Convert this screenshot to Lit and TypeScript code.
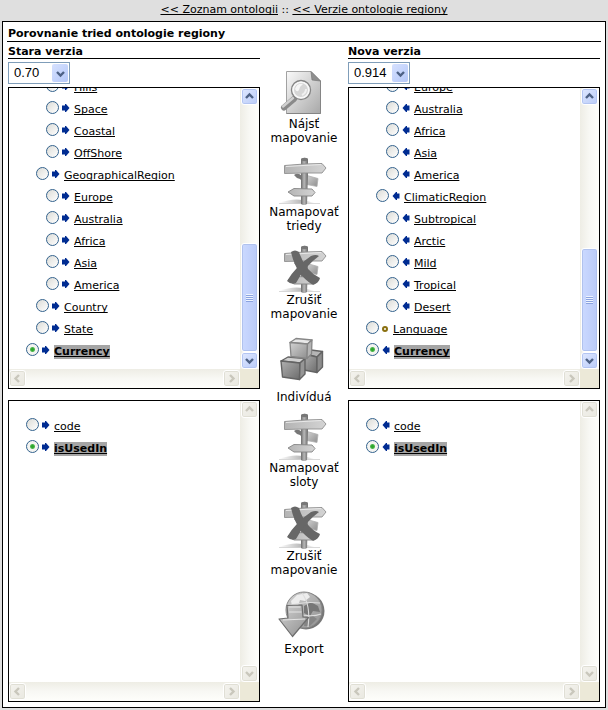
import { LitElement, html, css, svg, nothing } from "lit";
import { customElement, property } from "lit/decorators.js";
import { classMap } from "lit/directives/class-map.js";

type Marker = "right" | "left" | "dot";
interface Entry { name: string; level: number; marker: Marker; selected?: boolean; }

const entry = (marker: Marker) => (level: number, name: string, selected = false): Entry =>
  ({ name, level, marker, selected });
const old = entry("right");
const fresh = entry("left");

const oldClasses: Entry[] = [
  old(2, "Hills"), old(2, "Space"), old(2, "Coastal"), old(2, "OffShore"),
  old(1, "GeographicalRegion"), old(2, "Europe"), old(2, "Australia"),
  old(2, "Africa"), old(2, "Asia"), old(2, "America"),
  old(1, "Country"), old(1, "State"), old(0, "Currency", true),
];
const newClasses: Entry[] = [
  fresh(2, "Europe"), fresh(2, "Australia"), fresh(2, "Africa"), fresh(2, "Asia"),
  fresh(2, "America"), fresh(1, "ClimaticRegion"), fresh(2, "Subtropical"),
  fresh(2, "Arctic"), fresh(2, "Mild"), fresh(2, "Tropical"), fresh(2, "Desert"),
  entry("dot")(0, "Language"), fresh(0, "Currency", true),
];

const chevrons: Record<string, string> = {
  up: "M1 6 L4.5 2.5 L8 6",
  down: "M1 3 L4.5 6.5 L8 3",
  left: "M6 1 L2.5 4.5 L6 8",
  right: "M3 1 L6.5 4.5 L3 8",
};
const chevron = (dir: string) => html`
  <svg width="9" height="9" viewBox="0 0 9 9" aria-hidden="true">
    <path d=${chevrons[dir]} fill="none" stroke="currentColor" stroke-width="2.4" />
  </svg>`;

const markers = {
  right: html`<svg width="8" height="9" viewBox="0 0 8 9" aria-hidden="true">
    <path d="M0 1.5H3V0H4L7.5 4L4 8H3V6.5H0Z" fill="#002c92" /></svg>`,
  left: html`<svg width="8" height="9" viewBox="0 0 8 9" aria-hidden="true">
    <path d="M7.5 1.5H5V0H4L0.5 4L4 8H5V6.5H7.5Z" fill="#002c92" /></svg>`,
  dot: html`<svg width="7" height="9" viewBox="0 0 7 9" aria-hidden="true">
    <circle cx="3" cy="5" r="2" fill="#fff" stroke="#8a7010" stroke-width="2" /></svg>`,
};

@customElement("scroll-pane")
export class ScrollPane extends LitElement {
  @property({ type: Array }) entries: Entry[] = [];
  @property() label = "";
  /** Share of the track that the thumb covers; 0 means that nothing scrolls. */
  @property({ type: Number }) thumb = 0;

  static styles = css`
    :host { display: block; border: 1px solid #000; background: #fff; }
    .pane { display: grid; grid-template: 281px 19px / minmax(0, 1fr) 19px; }
    .view { display: flex; flex-direction: column; overflow: hidden; margin: 0; padding: 15px 0 0 17px; list-style: none; box-sizing: border-box; }
    .view.end { justify-content: flex-end; padding: 0 0 6px 17px; }
    .row { display: flex; flex: none; align-items: flex-start; height: 22px; }
    .row.level1 { padding-left: 10px; }
    .row.level2 { padding-left: 20px; }
    .radio {
      appearance: none; flex: none; box-sizing: border-box; width: 13px; height: 13px;
      margin: 2px 3px 0 0; border: 1px solid #33628d; border-radius: 50%;
      background: linear-gradient(135deg, #dcdcd7, #fff);
    }
    .radio:checked { background: radial-gradient(circle at 50% 50%, #2fa52f 0 1px, #4fb84f 2px, #f4f4f1 3px); }
    .marker { display: flex; margin: 5px 4px 0 0; }
    .name {
      margin-top: 4px; color: #000; font: 11px/14px Verdana, "DejaVu Sans", sans-serif;
      text-decoration: underline; text-decoration-thickness: 1px; text-underline-offset: 1px; text-decoration-skip-ink: none;
    }
    .selected { background: #a5a5a5; font-weight: bold; }
    .bar { display: flex; }
    .vertical { flex-direction: column; padding: 0 1px; background: linear-gradient(90deg, #eeede5, #f8f8f4 50%, #fefefb); }
    .horizontal { padding: 1px 0; background: linear-gradient(#eeede5, #f8f8f4 50%, #fefefb); }
    .track { flex: 1; display: flex; flex-direction: column; justify-content: flex-end; }
    .corner { background: #ece9d8; }
    .step {
      display: grid; place-items: center; flex: none; box-sizing: border-box; width: 17px; height: 17px; padding: 0;
      border: 1px solid #fff; border-radius: 3px; color: #4d6185;
      background: linear-gradient(135deg, #dfe8ff, #b9cbf8); box-shadow: inset 0 0 0 1px #b3c5f2;
    }
    .step:disabled { color: #c9c7bc; background: linear-gradient(135deg, #f4f3ee, #e9e8e0); box-shadow: inset 0 0 0 1px #e0dfd5; }
    .thumb {
      display: grid; place-items: center; box-sizing: border-box; border: 1px solid #fff; border-radius: 3px;
      background: linear-gradient(90deg, #cbd9ff, #bacbf9); box-shadow: inset 0 0 0 1px #b0c2ee;
    }
    .grip { width: 7px; height: 8px; background: repeating-linear-gradient(#eef4fe 0 1px, #8ba3e0 1px 2px); }
  `;

  private step(dir: string, caption: string, disabled: boolean) {
    return html`<button class="step" type="button" aria-label=${caption} ?disabled=${disabled}>${chevron(dir)}</button>`;
  }

  render() {
    const still = this.thumb === 0;
    return html`
      <div class="pane">
        <ul class=${classMap({ view: true, end: !still })} aria-label=${this.label}>
          ${this.entries.map((e, i) => html`
            <li class="row level${e.level}">
              <input class="radio" type="radio" name="entry" aria-labelledby="name${i}" .checked=${!!e.selected} />
              <span class="marker">${markers[e.marker]}</span>
              <a id="name${i}" class=${classMap({ name: true, selected: !!e.selected })} href="#${e.name}">${e.name}</a>
            </li>`)}
        </ul>
        <div class="bar vertical">
          ${this.step("up", "Hore", still)}
          <div class="track">
            ${still ? nothing : html`<div class="thumb" style="height:${this.thumb}%"><span class="grip"></span></div>`}
          </div>
          ${this.step("down", "Dole", still)}
        </div>
        <div class="bar horizontal">
          ${this.step("left", "Vľavo", true)}
          <div class="track"></div>
          ${this.step("right", "Vpravo", true)}
        </div>
        <div class="corner"></div>
      </div>`;
  }
}

const gradients = svg`
  <defs>
    <linearGradient id="pale" x1="0" y1="0" x2="1" y2="1"><stop offset="0" stop-color="#fafafa"/><stop offset="1" stop-color="#a8a8a8"/></linearGradient>
    <linearGradient id="mid" x1="0" y1="0" x2="1" y2="1"><stop offset="0" stop-color="#d2d2d2"/><stop offset="1" stop-color="#8e8e8e"/></linearGradient>
    <linearGradient id="board" x1="0" y1="0" x2="1" y2="0"><stop offset="0" stop-color="#b4b4b4"/><stop offset="1" stop-color="#d4d4d4"/></linearGradient>
    <linearGradient id="dark" x1="0" y1="0" x2="1" y2="1"><stop offset="0" stop-color="#b0b0b0"/><stop offset="1" stop-color="#6c6c6c"/></linearGradient>
    <linearGradient id="post" x1="0" y1="0" x2="1" y2="0"><stop offset="0" stop-color="#6c6c6c"/><stop offset=".45" stop-color="#b8b8b8"/><stop offset="1" stop-color="#686868"/></linearGradient>
    <linearGradient id="ground" x1="0" y1="0" x2="1" y2="0"><stop offset="0" stop-color="#fff"/><stop offset=".6" stop-color="#bbb"/><stop offset="1" stop-color="#fff"/></linearGradient>
  </defs>`;

const pageArt = svg`
  <path d="M12.5 3.5H37L46.5 13V45.5H12.5Z" fill="url(#pale)" stroke="#a2a2a2"/>
  <path d="M12.5 45.5H46.5V13" fill="none" stroke="#858585"/>
  <path d="M37 3.5L38 12L46.5 13Z" fill="#8f8f8f" stroke="#777" stroke-width=".7"/>
  <path d="M20 31L10 39.5" stroke="#8a8a8a" stroke-width="6" stroke-linecap="round"/>
  <path d="M19 30L9 38.5" stroke="#d0d0d0" stroke-width="2.4" stroke-linecap="round"/>
  <circle cx="27" cy="22" r="9.5" fill="#ececec" stroke="#858585" stroke-width="1.4"/>
  <circle cx="27" cy="22" r="7.8" fill="#d6d6d6" stroke="#f8f8f8" stroke-width="1.6"/>
  <path d="M21 21Q23 15 29 16Q26 18 25 22Q23 25 21 21Z" fill="#f6f6f6"/>
  <path d="M28 27Q32 25 32 21" fill="none" stroke="#f0f0f0" stroke-width="2"/>`;

const signArt = svg`
  <path d="M5 47Q18 42 29 44L41 47Q30 49 5 47Z" fill="url(#ground)"/>
  <path d="M5 47.5H46" stroke="#cfcfcf" stroke-width=".8"/>
  <path d="M20 19Q24 16 28 20L31 24L29 26L26 23Q22 22 20 19Z" fill="#777"/>
  <path d="M33 19.5L44 22.5L43 30.5L33 28.5Z" fill="url(#mid)" stroke="#b0b0b0" stroke-width=".8"/>
  <path d="M27 3Q31 0.5 34 3V16L33 48Q30 50 27 48Z" fill="url(#post)"/>
  <ellipse cx="30.5" cy="3.5" rx="3.4" ry="1.7" fill="#777"/>
  <path d="M10.5 9.5L30 8L48 7.5L52 12L48 17L30 17L10.5 17.5Z" fill="url(#board)" stroke="#8f8f8f" stroke-width=".9"/>
  <path d="M12 10.5L47 8.5" stroke="#e8e8e8" stroke-width="1.2"/>
  <path d="M14 36L20 32.5L38 33L41 36.5L38 40L20 40Z" fill="url(#board)" stroke="#858585" stroke-width=".9"/>`;

const crossedSignArt = svg`${signArt}
  <path d="M17 8Q21 5 25 8Q31 27 46 34Q45 39 39 41Q22 31 17 8Z" fill="#676767"/>
  <path d="M45 12Q42 10 37 12Q22 22 13 37Q17 41 22 39Q31 22 45 12Z" fill="#676767"/>`;

const cubesArt = svg`
  <g stroke="#636363" stroke-width="1.4" stroke-linejoin="round">
    <path d="M30 22L37 18L48.5 19.5L43 25Z" fill="#b5b5b5"/>
    <path d="M30 22L43 25V40.5L30 38Z" fill="url(#dark)"/>
    <path d="M43 25L48.5 19.5V35L43 40.5Z" fill="#8c8c8c"/>
    <path d="M7 29L14 25L31 26.5L26 31Z" fill="#d0d0d0"/>
    <path d="M7 29L26 31L25.5 47.5L8.5 45Z" fill="url(#dark)"/>
    <path d="M26 31L31 26.5V42L25.5 47.5Z" fill="#969696"/>
  </g>
  <g stroke="#868686" stroke-width="1.3" stroke-linejoin="round">
    <path d="M16 10.5L22 6.5L38 8L33.5 12Z" fill="#e8e8e8"/>
    <path d="M16 10.5L33.5 12L33 26.5L17 24.5Z" fill="url(#mid)"/>
    <path d="M33.5 12L38 8L37.5 22L33 26.5Z" fill="#b4b4b4"/>
  </g>`;

const globeArt = svg`
  <circle cx="32" cy="23" r="18.5" fill="#777"/>
  <circle cx="30" cy="22" r="18" fill="url(#mid)" stroke="#8a8a8a"/>
  <path d="M17 13L23 7L33 5L36 9L31 13L26 12L24 18L18 18Z" fill="#ededed"/>
  <path d="M30 18L37 14L44 18L46 24L39 23L36 28L30 25Z" fill="#777"/>
  <path d="M31 30L39 28L43 31L36 38L30 38Z" fill="#858585"/>
  <path d="M28 5Q37 17 34 39M13 18Q30 13 46 15M28 27Q39 29 47 26" fill="none" stroke="#ddd" stroke-width="1.1"/>
  <path d="M13 17.5L28 17L29 29L34.5 29.5L18.5 48.5L5 31L14 30Z" fill="url(#mid)" stroke="#6d6d6d" stroke-width="1.2" stroke-linejoin="round"/>
  <path d="M15 19H26.500M15 24H27.500M9 32L31 31" stroke="#e4e4e4" stroke-width="1.2"/>`;

const tools = [
  { art: pageArt, height: 49, lines: ["Nájsť", "mapovanie"] },
  { art: signArt, height: 49, lines: ["Namapovať", "triedy"] },
  { art: crossedSignArt, height: 49, lines: ["Zrušiť", "mapovanie"] },
  { art: cubesArt, height: 58, lines: ["Indivíduá"] },
  { art: signArt, height: 49, lines: ["Namapovať", "sloty"] },
  { art: crossedSignArt, height: 49, lines: ["Zrušiť", "mapovanie"] },
  { art: globeArt, height: 54, lines: ["Export"] },
];

@customElement("tool-button")
export class ToolButton extends LitElement {
  @property({ attribute: false }) tool = tools[0];

  static styles = css`
    :host { display: block; }
    .tool {
      display: flex; flex-direction: column; align-items: center; width: 100%; padding: 8px 0 0;
      border: 0; background: none; color: #000; font: 12px/14px Verdana, "DejaVu Sans", sans-serif; cursor: pointer;
    }
    .tall { padding-bottom: 3px; }
    .art { display: block; }
    .line { display: block; white-space: nowrap; }
  `;

  render() {
    const { art, height, lines } = this.tool;
    return html`
      <button type="button" class=${classMap({ tool: true, tall: lines.length > 1 })}>
        <svg class="art" width="60" height=${height} viewBox="0 0 60 ${height}" aria-hidden="true">${gradients}${art}</svg>
        ${lines.map((line) => html`<span class="line">${line}</span>`)}
      </button>`;
  }
}

@customElement("app-root")
export class AppRoot extends LitElement {
  static styles = css`
    :host {
      display: block; box-sizing: border-box; min-height: 100vh; padding: 0 2px 2px;
      background: #dfdfdf; color: #000; font: 11px/14px Verdana, "DejaVu Sans", sans-serif;
    }
    .crumbs { height: 17px; padding-top: 4px; line-height: 12px; text-align: center; }
    .crumbs a { color: #000; text-decoration-thickness: 1px; text-underline-offset: 1px; text-decoration-skip-ink: none; }
    .sheet { padding: 4px 4px 5px; border: 1px solid #000; background: #fff; }
    .title, .heading { margin: 0; border-bottom: 1px solid #000; font-size: 11px; font-weight: bold; }
    .title { padding: 1px 1px 0; line-height: 14px; }
    .heading { padding-top: 4px; line-height: 12px; }
    .columns { display: grid; grid-template-columns: minmax(0, 1fr) 88px minmax(0, 1fr); padding: 0 1px; }
    .tools { padding-top: 18px; }
    .picker { position: relative; display: block; width: 62px; height: 22px; margin: 3px 0; }
    .select {
      appearance: none; box-sizing: border-box; width: 100%; height: 100%; padding: 0 0 0 5px; border: 1px solid #7f9db9;
      border-radius: 0; background: #fff; color: #000; font: 13px/20px Tahoma, "Liberation Sans", sans-serif;
    }
    .drop {
      position: absolute; top: 2px; right: 2px; display: grid; place-items: center; width: 16px; height: 18px;
      border-radius: 2px; color: #4d6185; background: linear-gradient(135deg, #d6e1ff, #b5c8f8); pointer-events: none;
    }
    .pane + .pane { margin-top: 11px; }
  `;

  private side(title: string, version: string, classes: Entry[], thumb: number, make: typeof old) {
    return html`
      <section>
        <h2 class="heading">${title}</h2>
        <span class="picker">
          <select class="select" aria-label=${title}><option>${version}</option></select>
          <span class="drop">${chevron("down")}</span>
        </span>
        <scroll-pane class="pane" label="${title}: triedy" .entries=${classes} .thumb=${thumb}></scroll-pane>
        <scroll-pane class="pane" label="${title}: sloty" .entries=${[make(0, "code"), make(0, "isUsedIn", true)]}></scroll-pane>
      </section>`;
  }

  render() {
    return html`
      <nav class="crumbs"><a href="#zoznam">&lt;&lt; Zoznam ontologii</a> :: <a href="#verzie">&lt;&lt; Verzie ontologie regiony</a></nav>
      <main class="sheet">
        <h1 class="title">Porovnanie tried ontologie regiony</h1>
        <div class="columns">
          ${this.side("Stara verzia", "0.70", oldClasses, 44, old)}
          <div class="tools">${tools.map((tool) => html`<tool-button .tool=${tool}></tool-button>`)}</div>
          ${this.side("Nova verzia", "0.914", newClasses, 42, fresh)}
        </div>
      </main>`;
  }
}
